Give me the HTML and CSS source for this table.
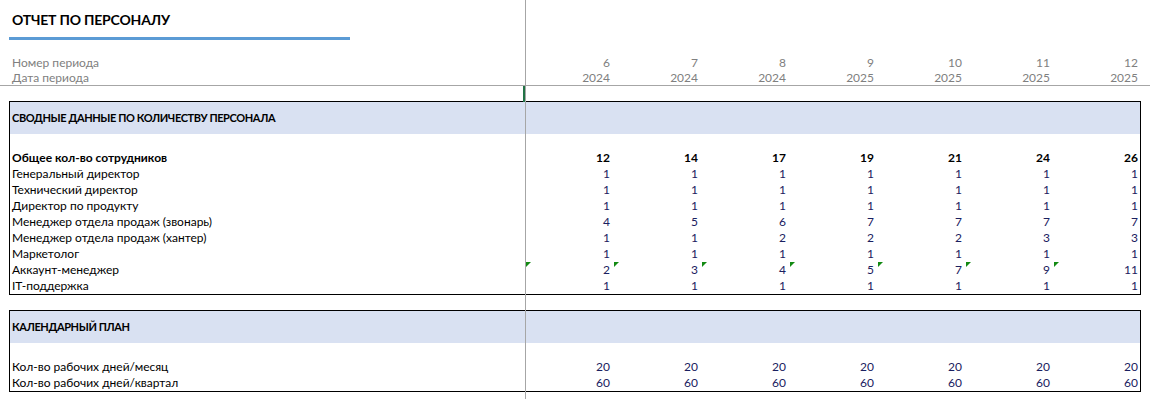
FILE: index.html
```html
<!DOCTYPE html>
<html lang="ru">
<head>
<meta charset="utf-8">
<title>Отчет по персоналу</title>
<link rel="stylesheet" href="styles.css">
</head>
<body>
<div class="sheet">
  <div class="freeze-line"></div>
  <div class="active-cell"></div>

  <div class="title-block">
    <h1 class="title">ОТЧЕТ ПО ПЕРСОНАЛУ</h1>
  </div>

  <div class="periods">
    <div class="row period-row">
      <div class="label">Номер периода</div>
      <div class="num">6</div><div class="num">7</div><div class="num">8</div><div class="num">9</div><div class="num">10</div><div class="num">11</div><div class="num">12</div>
    </div>
    <div class="row period-row">
      <div class="label">Дата периода</div>
      <div class="num">2024</div><div class="num">2024</div><div class="num">2024</div><div class="num">2025</div><div class="num">2025</div><div class="num">2025</div><div class="num">2025</div>
    </div>
  </div>

  <section class="block block-staff">
    <div class="band">СВОДНЫЕ ДАННЫЕ ПО КОЛИЧЕСТВУ ПЕРСОНАЛА</div>
    <div class="spacer"></div>
    <div class="row data-row total">
      <div class="label">Общее кол-во сотрудников</div>
      <div class="num">12</div><div class="num">14</div><div class="num">17</div><div class="num">19</div><div class="num">21</div><div class="num">24</div><div class="num">26</div>
    </div>
    <div class="row data-row">
      <div class="label">Генеральный директор</div>
      <div class="num">1</div><div class="num">1</div><div class="num">1</div><div class="num">1</div><div class="num">1</div><div class="num">1</div><div class="num">1</div>
    </div>
    <div class="row data-row">
      <div class="label">Технический директор</div>
      <div class="num">1</div><div class="num">1</div><div class="num">1</div><div class="num">1</div><div class="num">1</div><div class="num">1</div><div class="num">1</div>
    </div>
    <div class="row data-row">
      <div class="label">Директор по продукту</div>
      <div class="num">1</div><div class="num">1</div><div class="num">1</div><div class="num">1</div><div class="num">1</div><div class="num">1</div><div class="num">1</div>
    </div>
    <div class="row data-row">
      <div class="label">Менеджер отдела продаж (звонарь)</div>
      <div class="num">4</div><div class="num">5</div><div class="num">6</div><div class="num">7</div><div class="num">7</div><div class="num">7</div><div class="num">7</div>
    </div>
    <div class="row data-row">
      <div class="label">Менеджер отдела продаж (хантер)</div>
      <div class="num">1</div><div class="num">1</div><div class="num">2</div><div class="num">2</div><div class="num">2</div><div class="num">3</div><div class="num">3</div>
    </div>
    <div class="row data-row">
      <div class="label">Маркетолог</div>
      <div class="num">1</div><div class="num">1</div><div class="num">1</div><div class="num">1</div><div class="num">1</div><div class="num">1</div><div class="num">1</div>
    </div>
    <div class="row data-row">
      <div class="label">Аккаунт-менеджер</div>
      <div class="num flag">2</div><div class="num flag">3</div><div class="num flag">4</div><div class="num flag">5</div><div class="num flag">7</div><div class="num flag">9</div><div class="num flag">11</div>
    </div>
    <div class="row data-row">
      <div class="label">IT-поддержка</div>
      <div class="num">1</div><div class="num">1</div><div class="num">1</div><div class="num">1</div><div class="num">1</div><div class="num">1</div><div class="num">1</div>
    </div>
  </section>

  <section class="block block-calendar">
    <div class="band">КАЛЕНДАРНЫЙ ПЛАН</div>
    <div class="spacer"></div>
    <div class="row data-row">
      <div class="label">Кол-во рабочих дней/месяц</div>
      <div class="num">20</div><div class="num">20</div><div class="num">20</div><div class="num">20</div><div class="num">20</div><div class="num">20</div><div class="num">20</div>
    </div>
    <div class="row data-row">
      <div class="label">Кол-во рабочих дней/квартал</div>
      <div class="num">60</div><div class="num">60</div><div class="num">60</div><div class="num">60</div><div class="num">60</div><div class="num">60</div><div class="num">60</div>
    </div>
  </section>
</div>
</body>
</html>
```

FILE: styles.css
```css
* {
  box-sizing: border-box;
}

html, body {
  margin: 0;
  padding: 0;
  background: #ffffff;
}

body {
  font-family: "Lato", "Open Sans", "Liberation Sans", sans-serif;
  font-size: 12px;
  color: #000000;
}

.sheet {
  position: relative;
  width: 1150px;
  height: 399px;
  overflow: hidden;
}

/* frozen pane divider and active cell marker (overlays) */
.freeze-line {
  position: absolute;
  left: 525px;
  top: 0;
  width: 1px;
  height: 399px;
  background: #a6a6a6;
  z-index: 5;
}

.active-cell {
  position: absolute;
  left: 523px;
  top: 86px;
  width: 2px;
  height: 16px;
  background: #217346;
  z-index: 6;
}

/* title */
.title-block {
  margin-left: 9px;
  width: 341px;
  padding: 12px 0 9px 3px;
  border-bottom: 3px solid #5b9bd5;
}

.title {
  margin: 0;
  font-size: 14px;
  line-height: 16px;
  font-weight: 700;
  letter-spacing: -0.2px;
}

/* rows */
.row {
  display: grid;
  grid-template-columns: 514px repeat(7, 88px);
  height: 16px;
  line-height: 16px;
  white-space: nowrap;
}

.label {
  padding-left: 2px;
}

.num {
  position: relative;
  text-align: right;
  padding-right: 2px;
}

/* period header */
.periods {
  margin-top: 15px;
  border-bottom: 1px solid #a6a6a6;
}

.period-row {
  grid-template-columns: 524px repeat(7, 88px);
  height: 15px;
  line-height: 15px;
  color: #808080;
}

.period-row .label {
  padding-left: 12px;
}

/* blocks */
.block {
  margin-left: 9px;
  width: 1132px;
  border: 1px solid #000000;
}

.block-staff {
  margin-top: 15px;
}

.block-calendar {
  margin-top: 15px;
}

.band {
  height: 32px;
  line-height: 31px;
  padding-left: 2px;
  background: #d9e1f2;
  font-size: 11px;
  font-weight: 700;
  letter-spacing: -0.4px;
}

.spacer {
  height: 16px;
}

.data-row .num {
  color: #1a2060;
}

.total {
  font-weight: 700;
}

.total .num {
  color: #000000;
}

.flag::before {
  content: "";
  position: absolute;
  left: 2px;
  top: 0;
  width: 0;
  height: 0;
  border-top: 5px solid #138a13;
  border-right: 5px solid transparent;
}
```
